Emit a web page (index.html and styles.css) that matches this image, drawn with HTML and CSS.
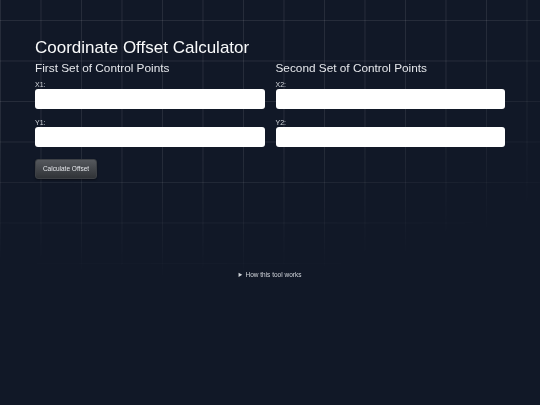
FILE: index.html
```html
<!DOCTYPE html>
<html lang="en">
  <head>
    <meta charset="UTF-8" />
    <meta name="viewport" content="width=device-width, initial-scale=1.0" />
    <title>Coordinate Offset Calculator</title>
    <link rel="stylesheet" href="styles.css">
  </head>
  <body>
    <div class="grid"></div>
    <div class="page">
      <h1 class="title">Coordinate Offset Calculator</h1>
      <div class="columns">
        <div class="pointSet">
          <h2>First Set of Control Points</h2>
          <label for="x1">X1:</label>
          <input id="x1" type="text" />
          <label for="y1">Y1:</label>
          <input id="y1" type="text" />
        </div>
        <div class="pointSet">
          <h2>Second Set of Control Points</h2>
          <label for="x2">X2:</label>
          <input id="x2" type="text" />
          <label for="y2">Y2:</label>
          <input id="y2" type="text" />
        </div>
      </div>
      <button class="calcBtn" onclick="calculate()">Calculate Offset</button>
      <div class="result" id="result"></div>
      <details class="info">
        <summary>How this tool works</summary>
        <p>Enter two sets of control points and the tool returns the X and Y offset between them.</p>
      </details>
    </div>

    <script>
      function calculate() {
        const x1 = parseFloat(document.getElementById("x1").value);
        const y1 = parseFloat(document.getElementById("y1").value);
        const x2 = parseFloat(document.getElementById("x2").value);
        const y2 = parseFloat(document.getElementById("y2").value);
        const result = document.getElementById("result");
        if ([x1, y1, x2, y2].some((v) => isNaN(v))) {
          result.textContent = "Please fill in all four values.";
          return;
        }
        result.textContent = `Offset: dX = ${x2 - x1}, dY = ${y2 - y1}`;
      }
    </script>
  </body>
</html>
```

FILE: styles.css
```css
body {
  margin: 0;
  min-height: 100vh;
  background: #111827;
  color: #f3f4f6;
  font-family: "Liberation Sans", Arial, sans-serif;
}
.grid {
  position: fixed;
  inset: 0;
  background-image: linear-gradient(rgba(255, 255, 255, 0.09) 1px, transparent 1px),
    linear-gradient(90deg, rgba(255, 255, 255, 0.09) 1px, transparent 1px);
  background-size: 40.5px 40.5px;
  background-position: 0 20px, 0 0;
  -webkit-mask-image: radial-gradient(ellipse 100% 70% at 35% 0%, #000 55%, transparent 100%);
  mask-image: radial-gradient(ellipse 100% 70% at 35% 0%, #000 55%, transparent 100%);
  pointer-events: none;
  z-index: 0;
}
.page {
  position: relative;
  z-index: 1;
  padding: 37px 35px 0;
}
.title {
  margin: 0;
  font-size: 17px;
  font-weight: normal;
  line-height: 21px;
  color: #f9fafb;
}
.columns {
  display: grid;
  grid-template-columns: 1fr 1fr;
  gap: 11px;
}
.pointSet {
  display: flex;
  flex-direction: column;
}
.pointSet h2 {
  margin: 3px 0 6px;
  font-size: 11.8px;
  font-weight: normal;
  line-height: 14px;
  color: #e5e7eb;
}
.pointSet label {
  font-size: 7px;
  line-height: 8px;
  color: #d1d5db;
}
.pointSet input {
  -webkit-appearance: none;
  appearance: none;
  height: 20px;
  box-sizing: border-box;
  border: 0;
  border-radius: 3px;
  background: #ffffff;
  margin: 0 0 10px;
  padding: 0 5px;
  outline: none;
  box-shadow: none;
}
.calcBtn {
  margin-top: -2px;
  width: 62px;
  height: 20px;
  border: 1px solid #3d4045;
  border-radius: 3px;
  background: linear-gradient(#55585d, #303337);
  color: #e5e7eb;
  font-family: "Liberation Sans", Arial, sans-serif;
  font-size: 6.5px;
  padding: 0;
  box-shadow: 0 1px 2px rgba(0, 0, 0, 0.4);
}
.result {
  min-height: 92px;
}
.info {
  text-align: center;
  font-size: 6.5px;
  color: #d1d5db;
}
.info summary {
  cursor: pointer;
}
```
